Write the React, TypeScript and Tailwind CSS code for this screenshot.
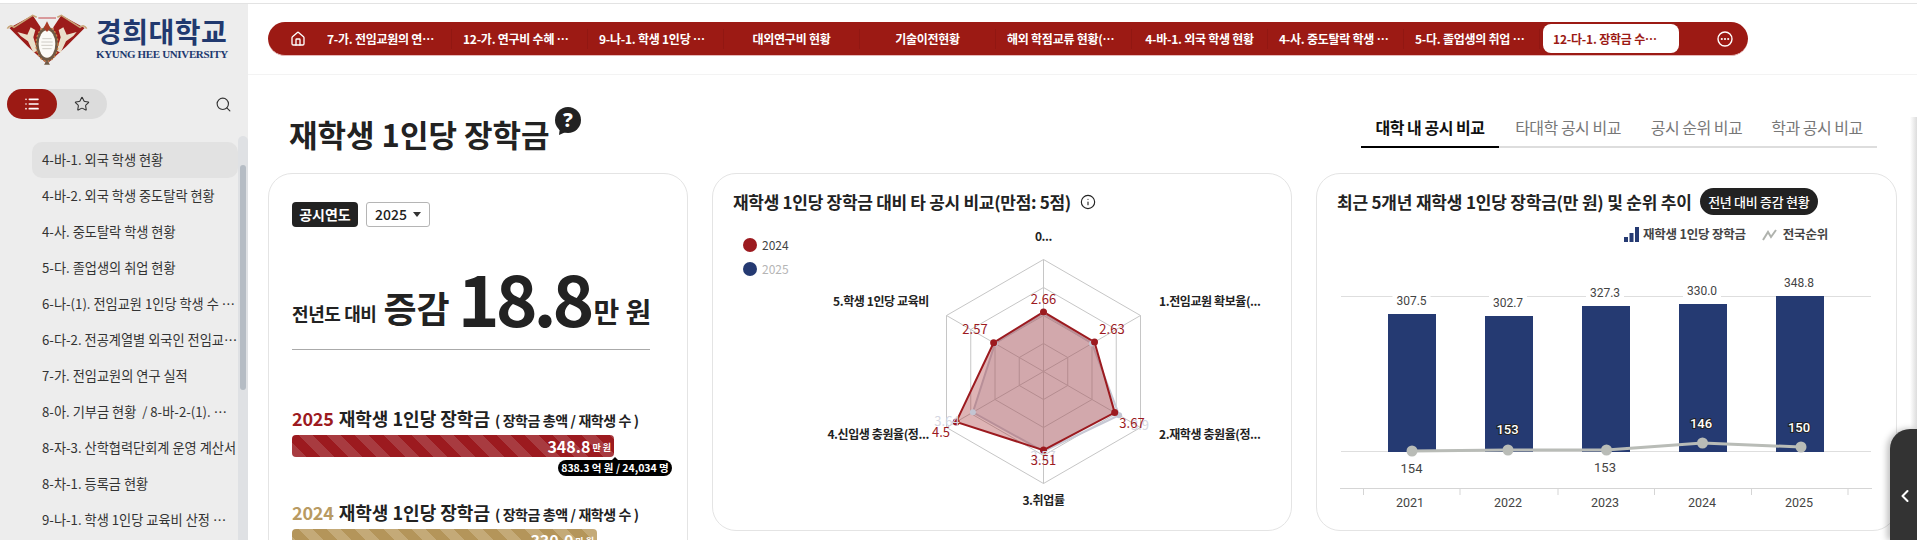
import { ChevronLeft, House, Info, List, Search, Star } from "lucide-react";

const navItems = [
  "7-가. 전임교원의 연구 실적",
  "12-가. 연구비 수혜 실적 현황",
  "9-나-1. 학생 1인당 교육비 산정",
  "대외연구비 현황",
  "기술이전현황",
  "해외 학점교류 현황(국외)",
  "4-바-1. 외국 학생 현황",
  "4-사. 중도탈락 학생 현황표",
  "5-다. 졸업생의 취업 현황표",
];

const sideItems = [
  "4-바-1. 외국 학생 현황",
  "4-바-2. 외국 학생 중도탈락 현황",
  "4-사. 중도탈락 학생 현황",
  "5-다. 졸업생의 취업 현황",
  "6-나-(1). 전임교원 1인당 학생 수 및 확보율",
  "6-다-2. 전공계열별 외국인 전임교원 현황",
  "7-가. 전임교원의 연구 실적",
  "8-아. 기부금 현황  / 8-바-2-(1). 기부금 모금",
  "8-자-3. 산학협력단회계 운영 계산서",
  "8-차-1. 등록금 현황",
  "9-나-1. 학생 1인당 교육비 산정 근거 및 기준",
];

function Logo() {
  return (
    <svg viewBox="0 0 300 198" className="w-[100px] h-[66px] shrink-0">
      <path d="M28 72 L98 34 L122 70 L119 130 L139 178 L84 128 Z" fill="#9c1c1a" />
      <path d="M254 72 L184 34 L160 70 L163 130 L143 178 L198 128 Z" fill="#9c1c1a" />
      <path d="M22 74 Q30 60 42 70 L98 34 L110 40" fill="none" stroke="#c8a678" strokeWidth="5" />
      <path d="M260 74 Q252 60 240 70 L184 34 L172 40" fill="none" stroke="#c8a678" strokeWidth="5" />
      <path d="M115 42 H168" stroke="#c4474a" strokeWidth="3" />
      <path d="M52 84 L82 92 L92 70 L106 78 L100 100 L112 140 L100 146 L84 112 L62 96 Z" fill="#eadfca" />
      <path d="M230 84 L200 92 L190 70 L176 78 L182 100 L170 140 L182 146 L198 112 L220 96 Z" fill="#eadfca" />
      <ellipse cx="141" cy="120" rx="33" ry="52" fill="#6f5a45" />
      <ellipse cx="141" cy="120" rx="33" ry="52" fill="none" stroke="#c77f43" strokeWidth="4" strokeDasharray="6 6" />
      <ellipse cx="141" cy="120" rx="25" ry="41" fill="#fbfaf6" />
      <path d="M127 104 H155 M124 114 H158 M124 124 H158 M127 134 H155" stroke="#b9b5ac" strokeWidth="2" />
      <path d="M141 52 L151 72 L141 84 L131 72 Z" fill="#a93a26" />
      <path d="M141 168 L150 182 H132 Z" fill="#6f5a45" />
    </svg>
  );
}

function QuestionBubble() {
  return (
    <svg viewBox="0 0 28 28" className="w-[28px] h-[28px] -mt-[26px] ml-[4px]">
      <circle cx="14" cy="13" r="13" fill="#222" />
      <path d="M6 20 L5 28 L14 24 Z" fill="#222" />
      <text x="14" y="20" textAnchor="middle" fontSize="20" fontWeight="800" fill="#fff" fontFamily="'Noto Sans', sans-serif">?</text>
    </svg>
  );
}

function Metric({ year, color, stripes, width, value }: { year: string; color: string; stripes: string; width: string; value: string }) {
  return (
    <div>
      <div className="flex items-baseline h-[24px] leading-[24px] whitespace-nowrap">
        <span className={`text-[18px] font-bold tracking-[-0.2px] ${color}`}>{year}</span>
        <span className="text-[18px] font-bold text-[#222] ml-[5px]">재학생 1인당 장학금</span>
        <span className="text-[14px] font-semibold text-[#222] ml-[5px] tracking-[-0.4px]">( 장학금 총액 / 재학생 수 )</span>
      </div>
      <div className={`mt-[5px] h-[22px] rounded-[4px] flex items-center justify-end pr-[3px] text-white ${stripes} ${width}`}>
        <span className="text-[16px] font-bold leading-none">{value}</span>
        <span className="text-[9px] font-bold ml-[2px] mt-[3px] leading-none">만 원</span>
      </div>
    </div>
  );
}

const R = 112;
const cx = 1043.5;
const cy = 371.5;
const pt = (i: number, r: number) => {
  const a = (Math.PI / 3) * i;
  return [cx + r * Math.sin(a), cy - r * Math.cos(a)];
};
const hex = (r: number) => [0, 1, 2, 3, 4, 5].map((i) => pt(i, r).join(",")).join(" ");
const v24 = [2.66, 2.63, 3.67, 3.51, 4.5, 2.57];
const v25 = [2.6, 2.5, 3.9, 3.57, 3.64, 2.5];
const poly = (v: number[]) => v.map((x, i) => pt(i, (x / 5) * R).join(",")).join(" ");

function Radar() {
  const valuePos: [string, number, number][] = [
    ["2.66", 1043.5, 304],
    ["2.63", 1112, 334],
    ["3.67", 1132, 428],
    ["3.51", 1043.5, 465],
    ["4.5", 941, 437],
    ["2.57", 975, 334],
  ];
  return (
    <svg viewBox="713 225 578 305" className="block w-[578px] h-[305px]">
      <circle cx="750" cy="245" r="7" fill="#9c1a1f" />
      <text x="762" y="249.5" fontSize="12" fill="#444">2024</text>
      <circle cx="750" cy="269" r="7" fill="#253a72" />
      <text x="762" y="273.5" fontSize="12" fill="#b5b5b5">2025</text>
      {[28, 56, 84, 112].map((r) => (
        <polygon key={r} points={hex(r)} fill="none" stroke="#c6c6c6" strokeWidth="1" />
      ))}
      {[0, 1, 2].map((i) => {
        const [a, b] = pt(i, R);
        const [c, d] = pt(i + 3, R);
        return <line key={i} x1={a} y1={b} x2={c} y2={d} stroke="#c6c6c6" strokeWidth="1" />;
      })}
      <polygon points={poly(v25)} fill="#b9bccb" fillOpacity="0.25" stroke="#c6c8d4" strokeWidth="2" />
      <polygon points={poly(v24)} fill="#9c1a1f" fillOpacity="0.33" stroke="#9c1a1f" strokeWidth="2" />
      {v25.map((x, i) => {
        const [a, b] = pt(i, (x / 5) * R);
        return <circle key={i} cx={a} cy={b} r="3" fill="#c3c5d2" />;
      })}
      {v24.map((x, i) => {
        const [a, b] = pt(i, (x / 5) * R);
        return <circle key={i} cx={a} cy={b} r="3.5" fill="#9c1a1f" />;
      })}
      <text x="1140" y="430" fontSize="13" fill="#d5d7e2" textAnchor="middle">3.9</text>
      <text x="947" y="426" fontSize="13" fill="#d5d7e2" textAnchor="middle">3.64</text>
      <text x="1043" y="461" fontSize="13" fill="#d5d7e2" textAnchor="middle">3.57</text>
      {valuePos.map(([t, x, y]) => (
        <text key={t} x={x} y={y} fontSize="13" fill="#9c1a1f" textAnchor="middle">{t}</text>
      ))}
      <g fill="#222" fontSize="12" fontWeight="600" letterSpacing="-0.4">
        <text x="1043.5" y="241" textAnchor="middle">0...</text>
        <text x="1159" y="306">1.전임교원 확보율(...</text>
        <text x="1159" y="439">2.재학생 충원율(정...</text>
        <text x="1043.5" y="505" textAnchor="middle">3.취업률</text>
        <text x="929" y="439" textAnchor="end">4.신입생 충원율(정...</text>
        <text x="929" y="306" textAnchor="end">5.학생 1인당 교육비</text>
      </g>
    </svg>
  );
}

const bars = [
  { year: "2021", x: 1389, top: 314, val: "307.5", vy: 305, lx: 1412.5, cxp: 1413, cyp: 451, rank: "154", rx: 1412.5, ry: 473, white: false, yx: 1411 },
  { year: "2022", x: 1486, top: 316, val: "302.7", vy: 307, lx: 1509, cxp: 1509, cyp: 450, rank: "153", rx: 1508.5, ry: 434, white: true, yx: 1509 },
  { year: "2023", x: 1583, top: 306, val: "327.3", vy: 296.5, lx: 1606, cxp: 1607.5, cyp: 450, rank: "153", rx: 1606, ry: 472, white: false, yx: 1606 },
  { year: "2024", x: 1680, top: 304, val: "330.0", vy: 295, lx: 1703, cxp: 1703.5, cyp: 443, rank: "146", rx: 1702, ry: 427.5, white: true, yx: 1703 },
  { year: "2025", x: 1777, top: 296, val: "348.8", vy: 287, lx: 1800, cxp: 1802, cyp: 447, rank: "150", rx: 1800, ry: 431.5, white: true, yx: 1800 },
];

function BarChart() {
  const ticks = [1364.5, 1461, 1559, 1655.5, 1752.5, 1849];
  return (
    <svg viewBox="1318 250 578 270" className="block w-[578px] h-[270px]" fontFamily="Roboto, sans-serif">
      <line x1="1342" x2="1872" y1="296.5" y2="296.5" stroke="#dedede" />
      <line x1="1342" x2="1872" y1="451.5" y2="451.5" stroke="#dedede" />
      {bars.map((b) => (
        <rect key={b.year} x={b.x} y={b.top} width="48" height={452 - b.top} fill="#253a72" />
      ))}
      {bars.map((b) => (
        <g key={b.year + "v"}>
          <rect x={b.lx - 19} y={b.vy - 12} width="38" height="15" fill="#fff" />
          <text x={b.lx} y={b.vy} fontSize="12" fill="#444" textAnchor="middle">{b.val}</text>
        </g>
      ))}
      <polyline points={bars.map((b) => `${b.cxp},${b.cyp}`).join(" ")} fill="none" stroke="#b9bcb7" strokeWidth="3" />
      {bars.map((b) => (
        <circle key={b.year + "c"} cx={b.cxp} cy={b.cyp} r="5.5" fill="#b9bcb7" />
      ))}
      {bars.map((b) =>
        b.white ? (
          <text key={b.year + "r"} x={b.rx} y={b.ry} fontSize="13" fontWeight="500" fill="#fff" stroke="#222" strokeWidth="2" paintOrder="stroke" textAnchor="middle">{b.rank}</text>
        ) : (
          <text key={b.year + "r"} x={b.rx} y={b.ry} fontSize="13" fill="#444" textAnchor="middle">{b.rank}</text>
        )
      )}
      <line x1="1341" x2="1873" y1="488.5" y2="488.5" stroke="#d5d5d5" />
      {ticks.map((t) => (
        <line key={t} x1={t} x2={t} y1="488" y2="495" stroke="#d5d5d5" />
      ))}
      {bars.map((b) => (
        <text key={b.year + "y"} x={b.yx} y="506.5" fontSize="12.5" fill="#444" textAnchor="middle">{b.year}</text>
      ))}
    </svg>
  );
}

export default function App() {
  return (
    <div className="relative h-[540px] w-[1917px] overflow-hidden bg-white pt-[3px] font-['Noto_Sans_CJK_KR','Noto_Sans',sans-serif]">
      <div className="flex h-[537px] border-t border-[#e3e3e3]">
        {/* sidebar */}
        <aside className="w-[248px] shrink-0 bg-[#ededed] flex flex-col">
          <div className="flex items-start h-[85px]">
            <Logo />
            <div className="-ml-[4px] pt-[12px] w-[136px]">
              <div className="text-[28px] leading-[30px] font-bold text-[#21396f] tracking-[0.5px] whitespace-nowrap">경희대학교</div>
              <div className="text-[11px] leading-[12px] mt-[2px] font-bold text-[#21396f] whitespace-nowrap font-['Liberation_Serif',serif] tracking-[-0.35px]">KYUNG HEE UNIVERSITY</div>
            </div>
          </div>
          <div className="flex items-center justify-between pl-[7px] pr-[16px] h-[30px]">
            <div className="flex w-[100px] h-[30px] rounded-full bg-[#dcdcdc]">
              <div className="w-[50px] h-[30px] rounded-full bg-[#9c1a14] flex items-center justify-center">
                <List size={16} className="text-white" strokeWidth={2.5} />
              </div>
              <div className="w-[50px] h-[30px] flex items-center justify-center">
                <Star size={16} className="text-[#333]" strokeWidth={1.6} />
              </div>
            </div>
            <Search size={17} className="text-[#333]" strokeWidth={1.6} />
          </div>
          <div className="flex flex-1 min-h-0 mt-[17px]">
            <ul className="w-[238px] pl-[32px] pt-[6px] overflow-hidden">
              {sideItems.map((t, i) => (
                <li
                  key={t}
                  className={`h-[36px] leading-[35px] pl-[10px] text-[13.2px] text-[#333] truncate whitespace-pre ${i === 0 ? "bg-[#e2e2e2] rounded-[10px]" : ""}`}
                >
                  {t}
                </li>
              ))}
            </ul>
            <div className="w-[10px] bg-[#dfe1e4] rounded-t-[5px] pt-[29px] pl-[2px]">
              <div className="w-[6px] h-[225px] rounded-full bg-[#b5bcc4]" />
            </div>
          </div>
        </aside>

        {/* main */}
        <main className="flex-1 min-w-0">
          <header className="h-[71px] border-b border-[#f3f3f3] pl-[20px] pt-[18px]">
            <nav className="w-[1480px] h-[34px] rounded-full bg-[#9c1a14] flex items-center text-white border-b border-[#e6b8b8]">
              <div className="w-[48px] flex justify-end pr-[10px]">
                <House size={16} strokeWidth={2} />
              </div>
              {navItems.map((t) => (
                <div key={t} className="w-[136px] px-[11px] text-[12px] font-semibold text-center truncate border-r border-[#911712] leading-[20px] tracking-[-0.25px]">
                  {t}
                </div>
              ))}
              <div className="ml-[3px] w-[136px] h-[29px] rounded-[8px] bg-white text-[#9c1a14] pl-[10px] pr-[18px] text-[12px] font-semibold leading-[29px] truncate tracking-[-0.2px]">
                12-다-1. 장학금 수혜 현황
              </div>
              <svg viewBox="0 0 16 16" className="w-[16px] h-[16px] ml-[38px]">
                <circle cx="8" cy="8" r="7" fill="none" stroke="#fff" strokeWidth="1.4" />
                <circle cx="4.8" cy="8" r="1.1" fill="#fff" />
                <circle cx="8" cy="8" r="1.1" fill="#fff" />
                <circle cx="11.2" cy="8" r="1.1" fill="#fff" />
              </svg>
            </nav>
          </header>

          <div className="flex items-start justify-between pl-[41px] pr-[40px] h-[73px]">
            <div className="flex items-center pt-[39px]">
              <h1 className="text-[31px] font-semibold text-[#222] leading-[40px] whitespace-nowrap">재학생 1인당 장학금</h1>
              <QuestionBubble />
            </div>
            <div className="flex self-end w-[516px] border-b-[2px] border-[#dddddd] text-[16px] leading-[17px] h-[29px] tracking-[-0.5px]">
              <div className="w-[138px] text-center font-bold text-[#111] border-b-[2px] border-black h-[29px]">대학 내 공시 비교</div>
              <div className="w-[136px] text-center text-[#777] ml-[1px]">타대학 공시 비교</div>
              <div className="w-[121px] text-center text-[#777]">공시 순위 비교</div>
              <div className="w-[120px] text-center text-[#777]">학과 공시 비교</div>
            </div>
          </div>

          <div className="flex gap-[24px] pl-[20px] mt-[25px] items-start">
            {/* left card */}
            <section className="w-[420px] h-[500px] shrink-0 rounded-[24px] border border-[#e4e4e4] pl-[23px] pr-[37px] pt-[28px]">
              <div className="flex items-center gap-[8px]">
                <span className="h-[25px] w-[66px] rounded-[4px] bg-[#222] text-white text-[14px] font-bold leading-[25px] text-center">공시연도</span>
                <div className="h-[25px] w-[64px] rounded-[3px] border border-[#b5b5b5] flex items-center justify-center gap-[6px] text-[14px] font-medium text-[#222]">
                  2025
                  <span className="w-0 h-0 border-x-[4px] border-x-transparent border-t-[5px] border-t-[#333]" />
                </div>
              </div>
              <div className="mt-[30px] h-[93px] border-b border-[#aaaaaa] flex items-end pb-[24px] whitespace-nowrap text-[#222] leading-none">
                <span className="text-[18px] font-semibold mb-[3px] tracking-[-0.4px]">전년도 대비</span>
                <span className="text-[36px] font-semibold ml-[7px]">증감</span>
                <span className="text-[71px] font-bold ml-[8px] tracking-[-4px] leading-[58px]">18.8</span>
                <span className="text-[28px] font-semibold ml-[3px]">만 원</span>
              </div>
              <div className="mt-[56px]">
                <Metric year="2025" color="text-[#9c1a1f]" stripes="bg-[repeating-linear-gradient(45deg,#a83b40_0,#a83b40_10px,#9c1a1f_10px,#9c1a1f_20px)]" width="w-[322px]" value="348.8" />
              </div>
              <div className="relative">
                <div className="absolute left-[266px] top-[3px] w-[114px] h-[16px] rounded-[8px] bg-black text-white text-[10.5px] font-semibold leading-[16px] text-center whitespace-nowrap">
                  <span className="absolute left-[54px] -top-[3px] w-0 h-0 border-x-[3px] border-x-transparent border-b-[3px] border-b-black" />
                  838.3 억 원 / 24,034 명
                </div>
              </div>
              <div className="mt-[43px]">
                <Metric year="2024" color="text-[#b89a62]" stripes="bg-[repeating-linear-gradient(45deg,#c4aa78_0,#c4aa78_10px,#b4955a_10px,#b4955a_20px)]" width="w-[305px]" value="330.0" />
              </div>
            </section>

            {/* middle card */}
            <section className="w-[580px] h-[358px] shrink-0 rounded-[24px] border border-[#e4e4e4]">
              <div className="flex items-start gap-[9px] pl-[20px] h-[51px] pt-[16px]">
                <h2 className="text-[17px] font-semibold text-[#222] leading-[24px] whitespace-nowrap tracking-[-0.3px]">재학생 1인당 장학금 대비 타 공시 비교(만점: 5점)</h2>
                <Info size={16} className="text-[#222] mt-[4px]" strokeWidth={1.7} />
              </div>
              <Radar />
            </section>

            {/* right card */}
            <section className="w-[581px] h-[358px] shrink-0 rounded-[24px] border border-[#e4e4e4]">
              <div className="flex items-center gap-[8px] pl-[20px] h-[41px] pt-[14px]">
                <h2 className="text-[17px] font-semibold text-[#222] leading-[27px] whitespace-nowrap tracking-[-0.2px]">최근 5개년 재학생 1인당 장학금(만 원) 및 순위 추이</h2>
                <span className="h-[27px] w-[118px] rounded-full bg-[#222] text-white text-[13px] font-medium leading-[27px] text-center whitespace-nowrap tracking-[-0.3px]">전년 대비 증감 현황</span>
              </div>
              <div className="flex items-center justify-end pr-[68px] h-[32px] mt-[3px] text-[12.5px] font-semibold text-[#444] whitespace-nowrap tracking-[-0.2px]">
                <svg viewBox="0 0 15 15" className="w-[15px] h-[15px] mr-[4px]">
                  <rect x="0" y="10" width="4" height="5" fill="#253a72" />
                  <rect x="5.5" y="6" width="4" height="9" fill="#253a72" />
                  <rect x="11" y="0" width="4" height="15" fill="#253a72" />
                </svg>
                재학생 1인당 장학금
                <svg viewBox="0 0 15 15" className="w-[15px] h-[15px] ml-[16px] mr-[6px]">
                  <path d="M1 13 L6 5 L9 10 L14 3" fill="none" stroke="#b0b3ae" strokeWidth="2" />
                </svg>
                전국순위
              </div>
              <BarChart />
            </section>
          </div>
        </main>
      </div>

      {/* overlapping off-canvas panel edge */}
      <div className="absolute right-0 top-[117px] bottom-0 w-[7px] bg-gradient-to-r from-transparent to-[#dcdcdc]" />
      <div className="absolute right-0 top-[429px] bottom-0 w-[27px] rounded-tl-[20px] bg-[#333333] shadow-[-3px_0_6px_rgba(0,0,0,0.25)] flex items-start pt-[57px] pl-[5px] text-white">
        <ChevronLeft size={20} strokeWidth={2.5} />
      </div>
    </div>
  );
}
